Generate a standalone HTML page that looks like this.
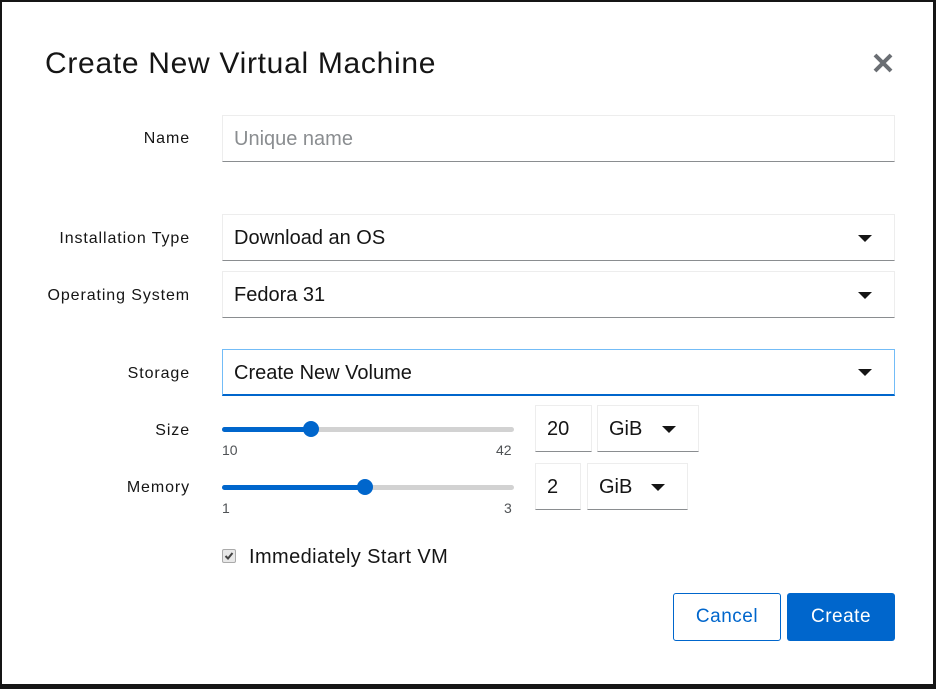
<!DOCTYPE html>
<html><head><meta charset="utf-8"><style>
*{box-sizing:border-box;margin:0;padding:0}
body{width:936px;height:689px;background:#151515;position:relative;overflow:hidden;font-family:"Liberation Sans",sans-serif;color:#151515}
#m{position:absolute;left:2px;top:2px;width:931px;height:682px;background:#fff}
.a{position:absolute}
h1{position:absolute;left:43px;top:45px;font-size:30px;font-weight:400;letter-spacing:0.7px}
.lbl{position:absolute;font-size:16px;text-align:right;white-space:nowrap;letter-spacing:0.9px}
.in{position:absolute;border:1px solid #ededed;border-bottom:1px solid #8a8d90;font-size:20px;padding-left:11px;padding-top:2px;display:flex;align-items:center}
.car{position:absolute;right:22px;top:50%;margin-top:-3px;width:0;height:0;border-left:7px solid transparent;border-right:7px solid transparent;border-top:7px solid #151515}
.track{position:absolute;height:5px;background:#d2d2d2;border-radius:3px}
.fill{position:absolute;left:0;top:0;height:5px;background:#0066cc;border-radius:3px}
.th{position:absolute;width:16px;height:16px;border-radius:50%;background:#0066cc;top:-6px}
.sm{position:absolute;font-size:14px;color:#4f5255}
.btn{position:absolute;top:591px;height:48px;border-radius:3px;font-size:19px;display:flex;align-items:center;justify-content:center;letter-spacing:0.5px}
</style></head><body><div id="m">
<h1>Create New Virtual Machine</h1>
<svg class="a" style="left:870px;top:50px" width="22" height="22" viewBox="0 0 22 22"><path d="M3 3L19 19M19 3L3 19" stroke="#6a6e73" stroke-width="4"/></svg>

<div class="lbl" style="top:128px;right:743px">Name</div>
<div class="in" style="left:220px;top:113px;width:673px;height:47px;color:#8a8d90">Unique name</div>

<div class="lbl" style="top:228px;right:743px">Installation Type</div>
<div class="in" style="left:220px;top:212px;width:673px;height:47px">Download an OS<div class="car"></div></div>

<div class="lbl" style="top:285px;right:743px">Operating System</div>
<div class="in" style="left:220px;top:269px;width:673px;height:47px">Fedora 31<div class="car"></div></div>

<div class="lbl" style="top:363px;right:743px">Storage</div>
<div class="in" style="left:220px;top:347px;width:673px;height:47px;border:1px solid #73bcf7;border-bottom:2px solid #0066cc">Create New Volume<div class="car"></div></div>

<div class="lbl" style="top:420px;right:743px">Size</div>
<div class="track" style="left:220px;top:425px;width:292px"><div class="fill" style="width:90px"></div><div class="th" style="left:81px"></div></div>
<div class="sm" style="left:220px;top:440px">10</div><div class="sm" style="left:494px;top:440px">42</div>
<div class="in" style="left:533px;top:403px;width:57px;height:47px">20</div>
<div class="in" style="left:595px;top:403px;width:102px;height:47px">GiB<div class="car" style="right:22px"></div></div>

<div class="lbl" style="top:477px;right:743px">Memory</div>
<div class="track" style="left:220px;top:483px;width:292px"><div class="fill" style="width:144px"></div><div class="th" style="left:135px"></div></div>
<div class="sm" style="left:220px;top:498px">1</div><div class="sm" style="left:502px;top:498px">3</div>
<div class="in" style="left:533px;top:461px;width:46px;height:47px">2</div>
<div class="in" style="left:585px;top:461px;width:101px;height:47px">GiB<div class="car" style="right:22px"></div></div>

<div class="a" style="left:220px;top:547px;width:14px;height:14px;border:1px solid #aaa;border-radius:2px;background:#e8e8e8"></div>
<svg class="a" style="left:222px;top:549px" width="10" height="10" viewBox="0 0 10 10"><path d="M1.5 5L4 7.5L8.5 2" stroke="#444" stroke-width="2" fill="none"/></svg>
<div class="a" style="left:247px;top:544px;font-size:20px;letter-spacing:0.4px">Immediately Start VM</div>

<div class="btn" style="left:671px;width:108px;border:1px solid #0066cc;color:#0066cc">Cancel</div>
<div class="btn" style="left:785px;width:108px;background:#0066cc;color:#fff">Create</div>
</div></body></html>
